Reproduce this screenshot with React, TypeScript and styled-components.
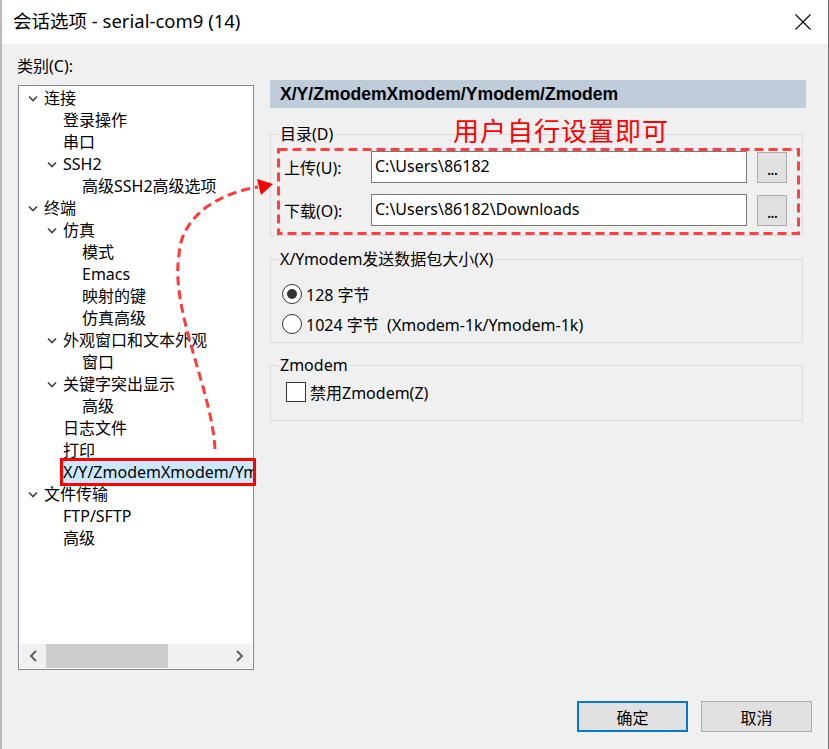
import React from 'react';
import styled, { createGlobalStyle } from 'styled-components';

const FONT = `"Noto Sans", "Noto Sans CJK SC", sans-serif`;

const GlobalStyle = createGlobalStyle`
  html, body { margin: 0; padding: 0; background: #f0f0f0; }
  body { font-family: ${FONT}; color: #000; }
  * { box-sizing: border-box; }
`;

const Window = styled.div`
  position: relative;
  width: 829px;
  height: 749px;
  border-left: 2px solid #b9b9b9;
  border-right: 1px solid #6f6f6f;
  background: #f0f0f0;
  display: flex;
  flex-direction: column;
  overflow: hidden;
`;

const TitleBar = styled.div`
  height: 44px;
  flex-shrink: 0;
  background: #fff;
  display: flex;
  align-items: center;
  justify-content: space-between;
  padding: 0 17px 0 11px;
`;

const Title = styled.div`
  font-size: 18.5px;
  line-height: 24px;
  margin-top: -2px;
`;

const Content = styled.div`
  flex: 1;
  display: flex;
  gap: 16px;
  padding: 11px 0 0 15px;
`;

const LeftCol = styled.div`
  width: 237px;
  display: flex;
  flex-direction: column;
`;

const FieldLabel = styled.div`
  font-size: 16px;
  line-height: 22px;
  height: 22px;
`;

const TreeBox = styled.div`
  width: 236px;
  height: 585px;
  margin: 8px 0 0 1px;
  border: 1px solid #828790;
  background: #fff;
  display: flex;
  flex-direction: column;
  overflow: hidden;
`;

const TreeList = styled.div`
  flex: 1;
  padding-top: 1px;
  overflow: hidden;
`;

const TreeRow = styled.div<{ $level: number }>`
  height: 22px;
  display: flex;
  align-items: center;
  white-space: nowrap;
  padding-left: ${(p) => 9 + p.$level * 19}px;
  font-size: 16px;
`;

const Toggle = styled.span`
  width: 16px;
  flex-shrink: 0;
  display: flex;
  align-items: center;
`;

const NodeLabel = styled.span<{ $selected?: boolean }>`
  line-height: 23px;
  padding: 0 2px;
  margin-left: -2px;
  background: ${(p) => (p.$selected ? '#cce8ff' : 'transparent')};
`;

const HScroll = styled.div`
  height: 24px;
  margin: 0 1px 1px;
  display: flex;
  background: #f0f0f0;
  flex-shrink: 0;
`;

const ScrollBtn = styled.div`
  width: 26px;
  display: flex;
  align-items: center;
  justify-content: center;
`;

const ScrollTrack = styled.div`
  flex: 1;
  display: flex;
`;

const ScrollThumb = styled.div`
  width: 122px;
  background: #cdcdcd;
`;

const RightCol = styled.div`
  width: 536px;
  margin-top: 25px;
  display: flex;
  flex-direction: column;
`;

const PageHeader = styled.div`
  height: 28px;
  background: #bfcddb;
  display: flex;
  align-items: center;
  padding-left: 10px;
  font-family: "Liberation Sans", "Noto Sans CJK SC", sans-serif;
  font-weight: bold;
  font-size: 17.6px;
  white-space: nowrap;
`;

const Group = styled.fieldset<{ $mt: number }>`
  margin: ${(p) => p.$mt}px 3px 0 0;
  padding: 0;
  border: 1px solid #dcdcdc;
  min-width: 0;
`;

const Legend = styled.legend`
  margin-left: 7px;
  padding: 0 2px;
  font-size: 16px;
  line-height: 20px;
`;

const GroupBody = styled.div<{ $pad: string }>`
  padding: ${(p) => p.$pad};
  display: flex;
  flex-direction: column;
`;

const PathRow = styled.div<{ $mt?: number }>`
  display: flex;
  align-items: center;
  height: 32px;
  margin-top: ${(p) => p.$mt ?? 0}px;
`;

const PathLabel = styled.span`
  width: 87px;
  font-size: 16px;
`;

const PathInput = styled.div`
  width: 376px;
  height: 32px;
  border: 1px solid #7a7a7a;
  background: #fff;
  font-size: 16px;
  line-height: 22px;
  padding: 3px 0 0 3px;
  white-space: nowrap;
`;

const BrowseButton = styled.div`
  width: 30px;
  height: 31px;
  margin-left: 10px;
  border: 1px solid #adadad;
  background: #e1e1e1;
  font-size: 16px;
  line-height: 32px;
  text-align: center;
  letter-spacing: -1px;
`;

const OptionRow = styled.div<{ $h: number }>`
  height: ${(p) => p.$h}px;
  display: flex;
  align-items: center;
  font-size: 16px;
  white-space: pre;
`;

const RadioCircle = styled.span<{ $checked?: boolean }>`
  width: 20px;
  height: 20px;
  border-radius: 50%;
  border: 1px solid #333;
  background: #fff;
  margin-right: 4px;
  display: flex;
  align-items: center;
  justify-content: center;
  &::after {
    content: '';
    width: 10px;
    height: 10px;
    border-radius: 50%;
    background: ${(p) => (p.$checked ? '#333' : 'transparent')};
  }
`;

const CheckBox = styled.span`
  width: 20px;
  height: 20px;
  border: 1px solid #333;
  background: #fff;
  margin-right: 4px;
`;

const Footer = styled.div`
  display: flex;
  justify-content: flex-end;
  gap: 13px;
  padding: 0 16px 17px 0;
`;

const DialogButton = styled.div<{ $default?: boolean }>`
  width: 111px;
  height: 31px;
  display: flex;
  align-items: center;
  justify-content: center;
  background: #e1e1e1;
  border: ${(p) => (p.$default ? '2px solid #0078d7' : '1px solid #adadad')};
  font-size: 16px;
`;

const AnnotationLayer = styled.svg`
  position: absolute;
  left: -2px;
  top: 0;
  pointer-events: none;
`;

const AnnotationText = styled.span`
  position: absolute;
  left: 451px;
  top: 114px;
  color: #ff0000;
  font-family: "Noto Sans CJK SC", sans-serif;
  font-size: 26px;
  line-height: 32px;
  letter-spacing: 1px;
  white-space: nowrap;
`;

type Node = { level: number; text: string; expanded?: boolean; selected?: boolean };

const nodes: Node[] = [
  { level: 0, text: '连接', expanded: true },
  { level: 1, text: '登录操作' },
  { level: 1, text: '串口' },
  { level: 1, text: 'SSH2', expanded: true },
  { level: 2, text: '高级SSH2高级选项' },
  { level: 0, text: '终端', expanded: true },
  { level: 1, text: '仿真', expanded: true },
  { level: 2, text: '模式' },
  { level: 2, text: 'Emacs' },
  { level: 2, text: '映射的键' },
  { level: 2, text: '仿真高级' },
  { level: 1, text: '外观窗口和文本外观', expanded: true },
  { level: 2, text: '窗口' },
  { level: 1, text: '关键字突出显示', expanded: true },
  { level: 2, text: '高级' },
  { level: 1, text: '日志文件' },
  { level: 1, text: '打印' },
  { level: 1, text: 'X/Y/ZmodemXmodem/Ymodem/Zmodem', selected: true },
  { level: 0, text: '文件传输', expanded: true },
  { level: 1, text: 'FTP/SFTP' },
  { level: 1, text: '高级' },
];

const Chevron = () => (
  <svg width="10" height="7" viewBox="0 0 10 7">
    <polyline points="1,1.5 5,5.5 9,1.5" fill="none" stroke="#404040" strokeWidth="1.6" />
  </svg>
);

const CloseIcon = () => (
  <svg width="16" height="16" viewBox="0 0 16 16">
    <line x1="0.5" y1="0.5" x2="15.5" y2="15.5" stroke="#000" strokeWidth="1.1" />
    <line x1="15.5" y1="0.5" x2="0.5" y2="15.5" stroke="#000" strokeWidth="1.1" />
  </svg>
);

const ScrollArrow = ({ dir }: { dir: 'left' | 'right' }) => (
  <svg width="9" height="12" viewBox="0 0 9 12">
    <polyline
      points={dir === 'left' ? '7,1 2,6 7,11' : '2,1 7,6 2,11'}
      fill="none"
      stroke="#606060"
      strokeWidth="2"
    />
  </svg>
);

export default function App() {
  return (
    <>
      <GlobalStyle />
      <Window>
        <TitleBar>
          <Title>会话选项 - serial-com9 (14)</Title>
          <CloseIcon />
        </TitleBar>
        <Content>
          <LeftCol>
            <FieldLabel>类别(C):</FieldLabel>
            <TreeBox>
              <TreeList>
                {nodes.map((n, i) => (
                  <TreeRow key={i} $level={n.level}>
                    <Toggle>{n.expanded ? <Chevron /> : null}</Toggle>
                    <NodeLabel $selected={n.selected}>{n.text}</NodeLabel>
                  </TreeRow>
                ))}
              </TreeList>
              <HScroll>
                <ScrollBtn>
                  <ScrollArrow dir="left" />
                </ScrollBtn>
                <ScrollTrack>
                  <ScrollThumb />
                </ScrollTrack>
                <ScrollBtn>
                  <ScrollArrow dir="right" />
                </ScrollBtn>
              </HScroll>
            </TreeBox>
          </LeftCol>
          <RightCol>
            <PageHeader>X/Y/ZmodemXmodem/Ymodem/Zmodem</PageHeader>
            <Group $mt={16}>
              <Legend>目录(D)</Legend>
              <GroupBody $pad="7px 0 9px 13px">
                <PathRow>
                  <PathLabel>上传(U):</PathLabel>
                  <PathInput>C:\Users\86182</PathInput>
                  <BrowseButton>...</BrowseButton>
                </PathRow>
                <PathRow $mt={11}>
                  <PathLabel>下载(O):</PathLabel>
                  <PathInput>C:\Users\86182\Downloads</PathInput>
                  <BrowseButton>...</BrowseButton>
                </PathRow>
              </GroupBody>
            </Group>
            <Group $mt={13}>
              <Legend>X/Ymodem发送数据包大小(X)</Legend>
              <GroupBody $pad="10px 0 3px 11px">
                <OptionRow $h={30}>
                  <RadioCircle $checked />
                  128 字节
                </OptionRow>
                <OptionRow $h={30}>
                  <RadioCircle />
                  {'1024 字节  (Xmodem-1k/Ymodem-1k)'}
                </OptionRow>
              </GroupBody>
            </Group>
            <Group $mt={12}>
              <Legend>Zmodem</Legend>
              <GroupBody $pad="6px 0 17px 15px">
                <OptionRow $h={22}>
                  <CheckBox />
                  禁用Zmodem(Z)
                </OptionRow>
              </GroupBody>
            </Group>
          </RightCol>
        </Content>
        <Footer>
          <DialogButton $default>确定</DialogButton>
          <DialogButton>取消</DialogButton>
        </Footer>

        <AnnotationText>用户自行设置即可</AnnotationText>
        <AnnotationLayer width="829" height="749" viewBox="0 0 829 749">
          <rect x="278.5" y="149.5" width="520" height="84" fill="none" stroke="#ff4040" strokeWidth="3" strokeDasharray="9 5" />
          <rect x="61.5" y="459.5" width="193" height="25" fill="none" stroke="#ff0000" strokeWidth="3" />
          <path
            d="M 215 449 C 212 390, 170 310, 179 255 C 181 215, 220 193, 258 187"
            fill="none"
            stroke="#ff3b3b"
            strokeWidth="3"
            strokeDasharray="9 5"
          />
          <polygon points="257,179 261,195 273,184" fill="#ff0000" />
        </AnnotationLayer>
      </Window>
    </>
  );
}
